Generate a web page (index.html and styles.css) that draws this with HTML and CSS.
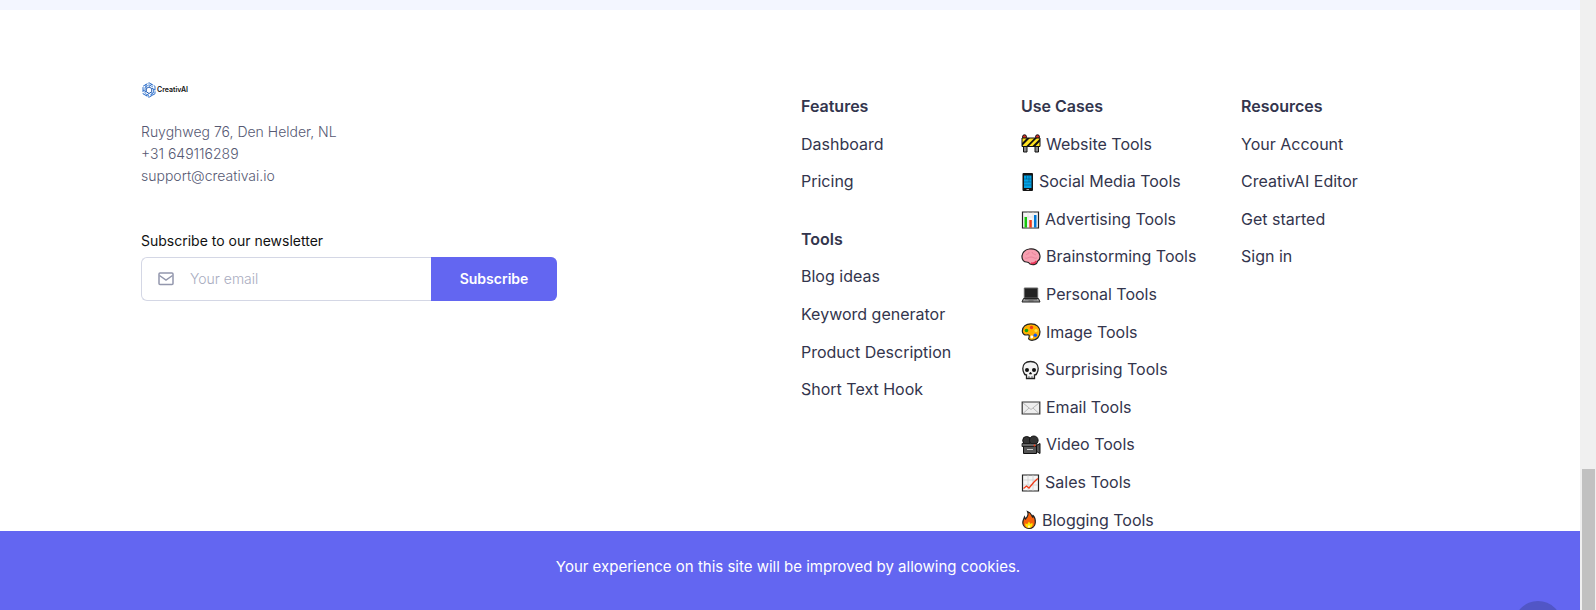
FILE: index.html
```html
<!DOCTYPE html>
<html lang="en">
<head>
    <meta charset="UTF-8">
    <title>CreativAI</title>
    <meta name="viewport" content="width=device-width, initial-scale=1"/>
    <link rel="stylesheet" href="styles.css">
</head>
<body>
<div class="page">
    <footer class="footer">
        <div class="row">
            <div class="col about">
                <a class="logo" href="#">
                    <svg viewBox="0 0 28 32" fill="none" stroke="#2f6fc9" stroke-width="2">
                        <path d="M14 1.500l12 7v15l-12 7-12-7v-15z" stroke-dasharray="10 2"/>
                        <path d="M14 5.500l-8 5v7M22 10l-8-4.500M23 14v8l-7 4.500M6 20v3l8 4.500" stroke="#5b93dd"/>
                        <path d="M14 10l5.500 3v6.500L14 23l-5.500-3.500V13z" stroke="#1d56ad"/>
                        <path d="M8 4v8M20 4l-6 5M26 16l-6-3.500M20 28v-8M8 28l6-5M2 16l6 3.500"/>
                    </svg>
                    <span>CreativAI</span>
                </a>
                <address>
                    Ruyghweg 76, Den Helder, NL<br>
                    +31 649116289<br>
                    support@creativai.io
                </address>
                <form class="subscribe">
                    <label for="email">Subscribe to our newsletter</label>
                    <div class="input-group">
                        <svg class="mail" viewBox="0 0 16 14" fill="none" stroke="#9397ad" stroke-width="1.500">
                            <rect x="1" y="1" width="14" height="11.500" rx="1"/>
                            <path d="M1.500 3.500L8 8l6.500-4.500"/>
                        </svg>
                        <input type="email" id="email" placeholder="Your email">
                        <button type="submit">Subscribe</button>
                    </div>
                </form>
            </div>
            <nav class="col links">
                <h3>Features</h3>
                <ul>
                    <li><a href="#">Dashboard</a></li>
                    <li><a href="#">Pricing</a></li>
                </ul>
                <h3>Tools</h3>
                <ul>
                    <li><a href="#">Blog ideas</a></li>
                    <li><a href="#">Keyword generator</a></li>
                    <li><a href="#">Product Description</a></li>
                    <li><a href="#">Short Text Hook</a></li>
                </ul>
            </nav>
            <nav class="col links">
                <h3>Use Cases</h3>
                <ul>
                    <li><a href="#">
                        <svg class="icon" viewBox="0 0 20 20">
                            <path d="M2.500 10h3.500v8H2.500zM14 10h3.500v8H14z" fill="#8a8a8a" stroke="#111"/>
                            <circle cx="3.500" cy="2.800" r="2" fill="#d93025" stroke="#111"/>
                            <circle cx="16.500" cy="2.800" r="2" fill="#d93025" stroke="#111"/>
                            <path d="M1 4h18v8.500H1z" fill="#ffe21f"/>
                            <path d="M1 9l5-5h3l-8 8zM5 12.500L13.500 4h2.500l-8.500 8.500zM11 12.500l8-8v3l-5 5z" fill="#111"/>
                            <path d="M1 4h18v8.500H1z" fill="none" stroke="#111"/>
                        </svg>
                        Website Tools</a></li>
                    <li><a href="#">
                        <svg class="icon narrow" viewBox="0 0 12 20">
                            <rect x="1" y="1" width="10.500" height="18" rx="1" fill="#151515"/>
                            <path d="M2.500 3.500h7.500v12.500H2.500z" fill="#00a3e8"/>
                            <path d="M2.500 7h7.500M2.500 10h7.500M2.500 13h7.500M5 3.500V7M7.500 3.500V10" stroke="#07587c" stroke-width=".6"/>
                            <path d="M5 17.500h2.500" stroke="#aaa"/>
                        </svg>
                        Social Media Tools</a></li>
                    <li><a href="#">
                        <svg class="icon medium" viewBox="0 0 19 20">
                            <path d="M1.500 2h16v16h-16z" fill="#f5f5f5" stroke="#222" stroke-width="1.200"/>
                            <path d="M2 7h15M2 12h15M7 2v16M12 2v16" stroke="#ddd" stroke-width=".6"/>
                            <path d="M3.500 7H6v10.500H3.500z" fill="#16c60c"/>
                            <path d="M8.300 10h2.500v7.500H8.300z" fill="#f03a17"/>
                            <path d="M13 5h2.500v12.500H13z" fill="#0078d7"/>
                        </svg>
                        Advertising Tools</a></li>
                    <li><a href="#">
                        <svg class="icon" viewBox="0 0 20 20">
                            <path d="M1 10C.8 6 4 2.500 8 2c5-.8 10 1.500 10.800 6 .6 3-.3 5-2 6-1 3.500-4.500 4.500-7.800 3-1-1.500-2-2-3.500-2C3 15 1 13 1 10z" fill="#f79fb0" stroke="#222" stroke-width="1.200"/>
                            <path d="M5 8c2-2 3 0 3-3M4 11c3 1 3-1 6-1s3 2 6 1M11 5c0 2 3 2 4 3" fill="none" stroke="#e8819a" stroke-width=".9"/>
                            <path d="M10 16c2 1 4 0 5.500-2" fill="none" stroke="#e83357" stroke-width="1.800"/>
                        </svg>
                        Brainstorming Tools</a></li>
                    <li><a href="#">
                        <svg class="icon" viewBox="0 0 20 20">
                            <path d="M3.300 3h13.400v10H3.300z" fill="#222" stroke="#666"/>
                            <path d="M2.500 13.500h15L19 17H1z" fill="#999" stroke="#222"/>
                            <path d="M4 14.700h12M7.500 16h5" stroke="#444" stroke-width=".7"/>
                        </svg>
                        Personal Tools</a></li>
                    <li><a href="#">
                        <svg class="icon" viewBox="0 0 20 20">
                            <path d="M1.300 9C1.500 4.500 5 1.800 10 1.800c5.500 0 9 3.500 9 8s-3 8.500-8 8.500c-3 0-4-1.500-3-3 .6-1.500.2-2.800-1.500-2.500-3 .8-5.200-1-5.200-3.800z" fill="#ffb000" stroke="#222" stroke-width="1.200"/>
                            <circle cx="5.500" cy="8.500" r="1.800" fill="#16a60c"/>
                            <circle cx="10.500" cy="5.500" r="1.700" fill="#f03a17"/>
                            <circle cx="15" cy="8.500" r="1.600" fill="#ffe34a"/>
                            <circle cx="14.300" cy="13.300" r="1.800" fill="#1559f0"/>
                            <circle cx="10.800" cy="15" r="1.400" fill="#fff"/>
                        </svg>
                        Image Tools</a></li>
                    <li><a href="#">
                        <svg class="icon medium" viewBox="0 0 19 20">
                            <path d="M9.500 1.500c5 0 7.700 3 7.700 7 0 2-.7 3.500-1.200 4.500-.3 1.500-1 2-2.500 2v3.500h-8V15C4 15 3.300 14.500 3 13c-.5-1-1.200-2.500-1.200-4.500 0-4 2.700-7 7.700-7z" fill="#f3f3f3" stroke="#222" stroke-width="1.300"/>
                            <circle cx="6" cy="10" r="2" fill="#111"/>
                            <circle cx="13" cy="10" r="2" fill="#111"/>
                            <path d="M9.500 12l1.200 2H8.300zM8 16v2M11 16v2" fill="#111" stroke="#111" stroke-width=".6"/>
                        </svg>
                        Surprising Tools</a></li>
                    <li><a href="#">
                        <svg class="icon" viewBox="0 0 20 20">
                            <path d="M1.200 4h17.600v12H1.200z" fill="#eee" stroke="#333" stroke-width="1.200"/>
                            <path d="M2 5l8 6.500L18 5M2 15.500l6-5.500M18 15.500L12 10" fill="none" stroke="#aaa" stroke-width=".8"/>
                        </svg>
                        Email Tools</a></li>
                    <li><a href="#">
                        <svg class="icon" viewBox="0 0 20 20">
                            <path d="M2.500 10h13v8.500h-13z" fill="#555" stroke="#111"/>
                            <circle cx="5.700" cy="5.500" r="4" fill="#333" stroke="#111"/>
                            <circle cx="12.800" cy="5.300" r="4.300" fill="#333" stroke="#111"/>
                            <path d="M1 8.500h15v3H1z" fill="#666" stroke="#111" stroke-width=".8"/>
                            <path d="M15.500 10.500l3.500-2v10l-3.500-2z" fill="#555" stroke="#111"/>
                            <path d="M6 14.500h6" stroke="#ccc"/>
                            <circle cx="13.500" cy="10.500" r="1" fill="#f03a17"/>
                        </svg>
                        Video Tools</a></li>
                    <li><a href="#">
                        <svg class="icon medium" viewBox="0 0 19 20">
                            <path d="M1.500 2h16v16h-16z" fill="#f5f5f5" stroke="#222" stroke-width="1.200"/>
                            <path d="M2 7h15M2 12h15M7 2v16M12 2v16" stroke="#ccc" stroke-width=".7"/>
                            <path d="M2.500 15.500L5.500 13l2.500 2 5-6 3.800-3.500" fill="none" stroke="#f03a17" stroke-width="1.300"/>
                        </svg>
                        Sales Tools</a></li>
                    <li><a href="#">
                        <svg class="icon small" viewBox="0 0 15 20">
                            <path d="M6 1.500c4 1 3.500 3.500 5 5.500l.5-1.500c2 2 2.500 4.500 2.300 7-.2 3.500-2.800 6-6.300 6s-6-2.500-6.200-5.500C1 10.500 2.500 9 3 7l1 2c2-2 3.500-4.500 2-7.500z" fill="#f7630c" stroke="#222" stroke-width="1.200"/>
                            <path d="M7.500 11.500l1.500 2.500 1.800-1.200c1 2.700-.5 5.200-3.300 5.200s-4.300-2.200-3.500-4.700l1.700 1z" fill="#ffe600"/>
                            <path d="M7.500 14.500l1.300 3H6.200z" fill="#fffbd0"/>
                        </svg>
                        Blogging Tools</a></li>
                </ul>
            </nav>
            <nav class="col links">
                <h3>Resources</h3>
                <ul>
                    <li><a href="#">Your Account</a></li>
                    <li><a href="#">CreativAI Editor</a></li>
                    <li><a href="#">Get started</a></li>
                    <li><a href="#">Sign in</a></li>
                </ul>
            </nav>
        </div>
    </footer>
    <div class="cookies">
        <p>Your experience on this site will be improved by allowing cookies.</p>
        <a class="to-top" href="#"></a>
    </div>
</div>
<div class="scrollbar"><div class="thumb"></div></div>
</body>
</html>
```
FILE: styles.css
```css
*{
    box-sizing: border-box;
}

body{
    margin: 0;
    height: 100vh;
    display: flex;
    overflow: hidden;
    color: #33354d;
    background: #fff;
    font: 16px/1.6 Inter, "Noto Sans", sans-serif;
}

a{
    color: inherit;
    text-decoration: none;
}

.page{
    flex: 1;
    display: flex;
    flex-direction: column;
    position: relative;
    overflow: hidden;
}

/* footer */
.footer{
    flex: 1;
    min-height: 0;
    padding-top: 69px;
    border-top: 10px solid #f3f6ff;
}
.row{
    width: 100%;
    max-width: 1320px;
    margin: 0 auto;
    display: grid;
    grid-template-columns: 3fr 1fr 1fr 1fr;
}
.col{
    padding: 0 11px;
}

.logo{
    height: 22px;
    display: flex;
    align-items: center;
    gap: 1px;
    padding-left: 1px;
    color: #111;
    font-size: 7px;
    font-weight: 600;
}
.logo svg{
    width: 14px;
    height: 16px;
}

address{
    margin-top: 20px;
    color: #565973;
    font-size: 14px;
    font-style: normal;
    font-weight: 300;
    line-height: 22px;
}

.subscribe{
    margin-top: 43px;
    max-width: 416px;
}
.subscribe label{
    display: block;
    color: #111;
    font-size: 14px;
    line-height: 22px;
    margin-bottom: 5px;
}
.input-group{
    height: 44px;
    display: flex;
    align-items: center;
    border: 1px solid #d4d7e5;
    border-right: 0;
    border-radius: 6px;
}
.mail{
    width: 16px;
    height: 14px;
    margin: 0 16px;
}
.input-group input{
    flex: 1;
    min-width: 0;
    border: 0;
    padding: 0;
    outline: 0;
    background: none;
    font: 300 14px/22px Inter, sans-serif;
}
.input-group input::placeholder{
    color: #a9acc0;
}
.input-group button{
    width: 126px;
    height: 44px;
    border: 0;
    color: #fff;
    background: #6366f1;
    border-radius: 0 6px 6px 0;
    font: 600 14px/22px Inter, sans-serif;
}

.links{
    padding-top: 15px;
    white-space: nowrap;
}
.links h3{
    margin: 0 0 12px;
    font-size: 16px;
    font-weight: 600;
}
.links ul{
    margin: 0 0 32px;
    padding: 0;
    list-style: none;
}
.links li{
    margin-bottom: 12px;
}
.links li:last-child{
    margin-bottom: 0;
}
.links a{
    display: flex;
    align-items: center;
    gap: 5px;
}
.icon{
    width: 20px;
    height: 20px;
}
.icon.medium{
    width: 19px;
}
.icon.small{
    width: 16px;
}
.icon.narrow{
    width: 13px;
}

/* cookie bar */
.cookies{
    height: 79px;
    padding: 24px 4px 24px 0;
    color: #fff;
    font-size: 15px;
    text-align: center;
    background: #6366f1;
    position: relative;
    overflow: hidden;
}
.cookies p{
    margin: 0;
}
.to-top{
    position: absolute;
    top: 70px;
    right: 18px;
    width: 48px;
    height: 48px;
    border-radius: 50%;
    background: #5156c6;
}

/* scroll track */
.scrollbar{
    width: 16px;
    padding: 0 1px 0 2px;
    display: flex;
    align-items: flex-end;
    background: #f0f0f0;
}
.thumb{
    width: 100%;
    height: 141px;
    background: #c1c1c1;
}
```
